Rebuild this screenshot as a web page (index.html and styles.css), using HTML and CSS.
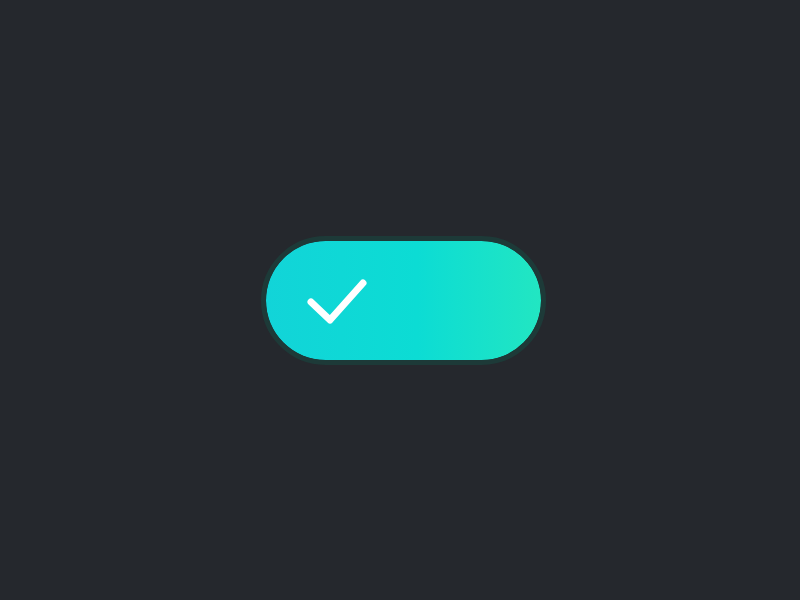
FILE: index.html
```html
<!DOCTYPE html>
<html>
<head>
<meta charset="utf-8">
<link rel="stylesheet" href="styles.css">
</head>
<body>
<div class="stage">
  <div class="toggle">
    <svg class="check" width="60" height="48" viewBox="0 0 60 48">
      <path d="M4 25 L23 43 L56 6" fill="none" stroke="#ffffff" stroke-width="7" stroke-linecap="round" stroke-linejoin="round"/>
    </svg>
  </div>
</div>
</body>
</html>
```
FILE: styles.css
```css
html, body {
  margin: 0;
  padding: 0;
  background: #25282d;
}
.stage {
  width: 800px;
  height: 600px;
  display: flex;
  align-items: center;
  justify-content: center;
  padding-left: 6px;
  box-sizing: border-box;
}
.toggle {
  width: 285px;
  height: 129px;
  box-sizing: border-box;
  border: 5px solid #1d3a38;
  border-radius: 65px;
  background: linear-gradient(90deg, #12d4d8 0%, #0cdcd4 55%, #22e6c2 100%);
  background-clip: padding-box;
  display: flex;
  align-items: center;
  padding-left: 41px;
  padding-top: 1px;
}
.check {
  display: block;
}
```
